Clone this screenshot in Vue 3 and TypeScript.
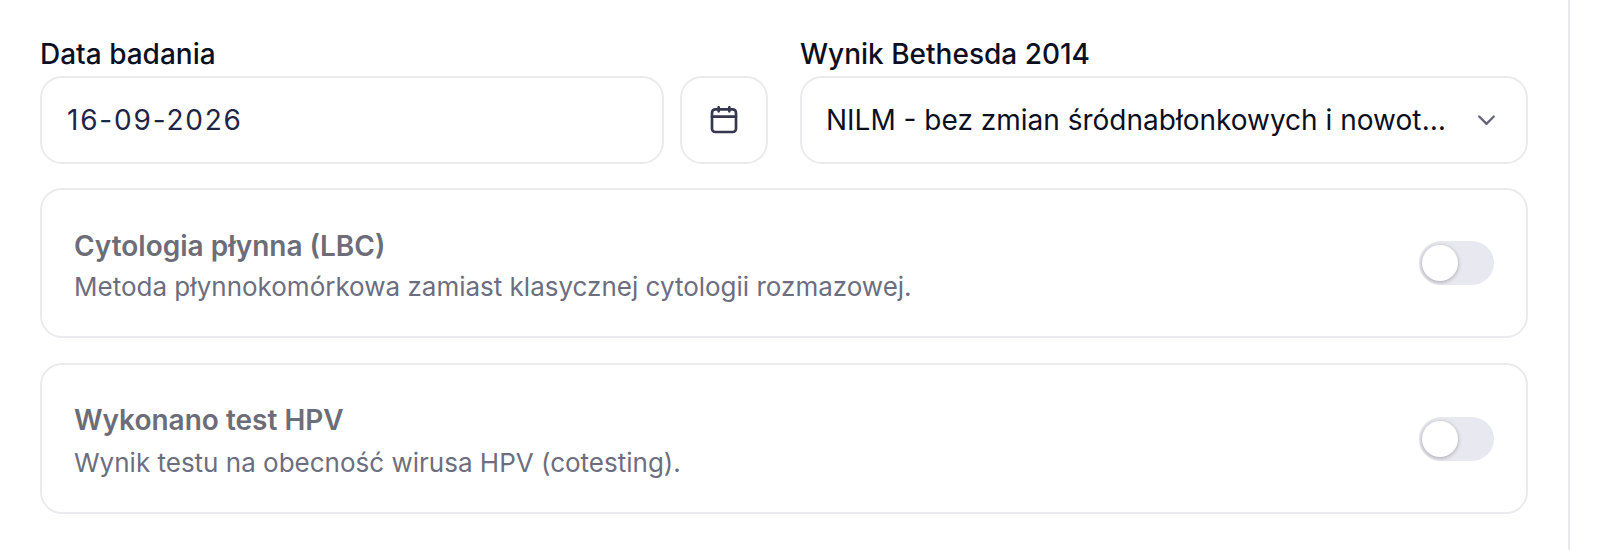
<script setup lang="ts">
interface Option { title: string; text: string }
const options: Option[] = [
  { title: 'Cytologia płynna (LBC)', text: 'Metoda płynnokomórkowa zamiast klasycznej cytologii rozmazowej.' },
  { title: 'Wykonano test HPV', text: 'Wynik testu na obecność wirusa HPV (cotesting).' },
]
</script>

<template>
  <div class="page">
    <main class="form">
      <div class="fields">
        <section class="field">
          <label class="label">Data badania</label>
          <div class="date-row">
            <div class="box date-input">16-09-2026</div>
            <button class="box cal" type="button" aria-label="Kalendarz">
              <svg viewBox="0 0 24 24" width="32" height="32" fill="none" stroke="#35364f" stroke-width="2" stroke-linecap="round" stroke-linejoin="round">
                <rect x="3" y="4" width="18" height="17" rx="2.5" />
                <path d="M3 9.5h18M8 2.5v3M16 2.5v3" />
              </svg>
            </button>
          </div>
        </section>
        <section class="field">
          <label class="label">Wynik Bethesda 2014</label>
          <div class="box select">
            <span class="select-text">NILM - bez zmian śródnabłonkowych i nowotworowych</span>
            <svg class="chev" viewBox="0 0 24 24" width="27" height="27" fill="none" stroke="#63647a" stroke-width="2" stroke-linecap="round" stroke-linejoin="round">
              <path d="M5.5 8.5 12 15l6.5-6.5" />
            </svg>
          </div>
        </section>
      </div>
      <div v-for="o in options" :key="o.title" class="card">
        <div class="card-text">
          <div class="card-title">{{ o.title }}</div>
          <div class="card-sub">{{ o.text }}</div>
        </div>
        <div class="toggle"><span class="thumb"></span></div>
      </div>
    </main>
  </div>
</template>

<style>
html, body { margin: 0; background: #fff; }
</style>

<style scoped>
.page {
  box-sizing: border-box;
  width: 1570px;
  height: 550px;
  padding: 39px 40px 0 40px;
  border-right: 2px solid #e8e8ee;
  font-family: Inter, "Liberation Sans", sans-serif;
}
.form { display: flex; flex-direction: column; }
.fields {
  display: grid;
  grid-template-columns: 728px 728px;
  column-gap: 32px;
  margin-bottom: 24px;
}
.field { display: flex; flex-direction: column; min-width: 0; }
.label {
  font-size: 28px;
  line-height: 30px;
  font-weight: 500;
  color: #0c0f1f;
  margin-bottom: 7px;
}
.box {
  box-sizing: border-box;
  height: 88px;
  border: 2px solid #ebebef;
  border-radius: 22px;
  background: #fff;
}
.date-row { display: flex; gap: 16px; }
.date-input {
  flex: 1;
  display: flex;
  align-items: center;
  padding-left: 25px;
  font-size: 28px;
  letter-spacing: 1.8px;
  color: #1e2547;
}
.cal {
  flex: none;
  width: 88px;
  padding: 0;
  display: flex;
  align-items: center;
  justify-content: center;
}
.select {
  display: flex;
  align-items: center;
  padding: 0 26px 0 24px;
  font-size: 28px;
  color: #0c0f1f;
}
.select-text {
  flex: 1;
  min-width: 0;
  white-space: nowrap;
  overflow: hidden;
  text-overflow: ellipsis;
  margin-right: 24px;
}
.chev { flex: none; }
.card {
  box-sizing: border-box;
  height: 150px;
  display: flex;
  align-items: center;
  justify-content: space-between;
  padding: 0 32px;
  border: 2px solid #ebebef;
  border-radius: 22px;
  margin-bottom: 25px;
}
.card:last-child { height: 151px; }
.card-text { padding-top: 6px; }
.card:last-child .card-text { padding-top: 5px; }
.card-title {
  font-size: 28px;
  line-height: 36px;
  font-weight: 600;
  color: #6c6d78;
}
.card-sub {
  margin-top: 6px;
  font-size: 26px;
  line-height: 34px;
  color: #6c6e80;
}
.card:last-child .card-sub { margin-top: 8px; }
.toggle {
  position: relative;
  flex: none;
  width: 75px;
  height: 44px;
  border-radius: 22px;
  background: #e8e8f0;
}
.thumb {
  position: absolute;
  left: 3px;
  top: 4px;
  width: 36px;
  height: 36px;
  border-radius: 50%;
  background: #fff;
  box-shadow: 0 1px 4px rgba(0, 0, 0, 0.3);
}
</style>
